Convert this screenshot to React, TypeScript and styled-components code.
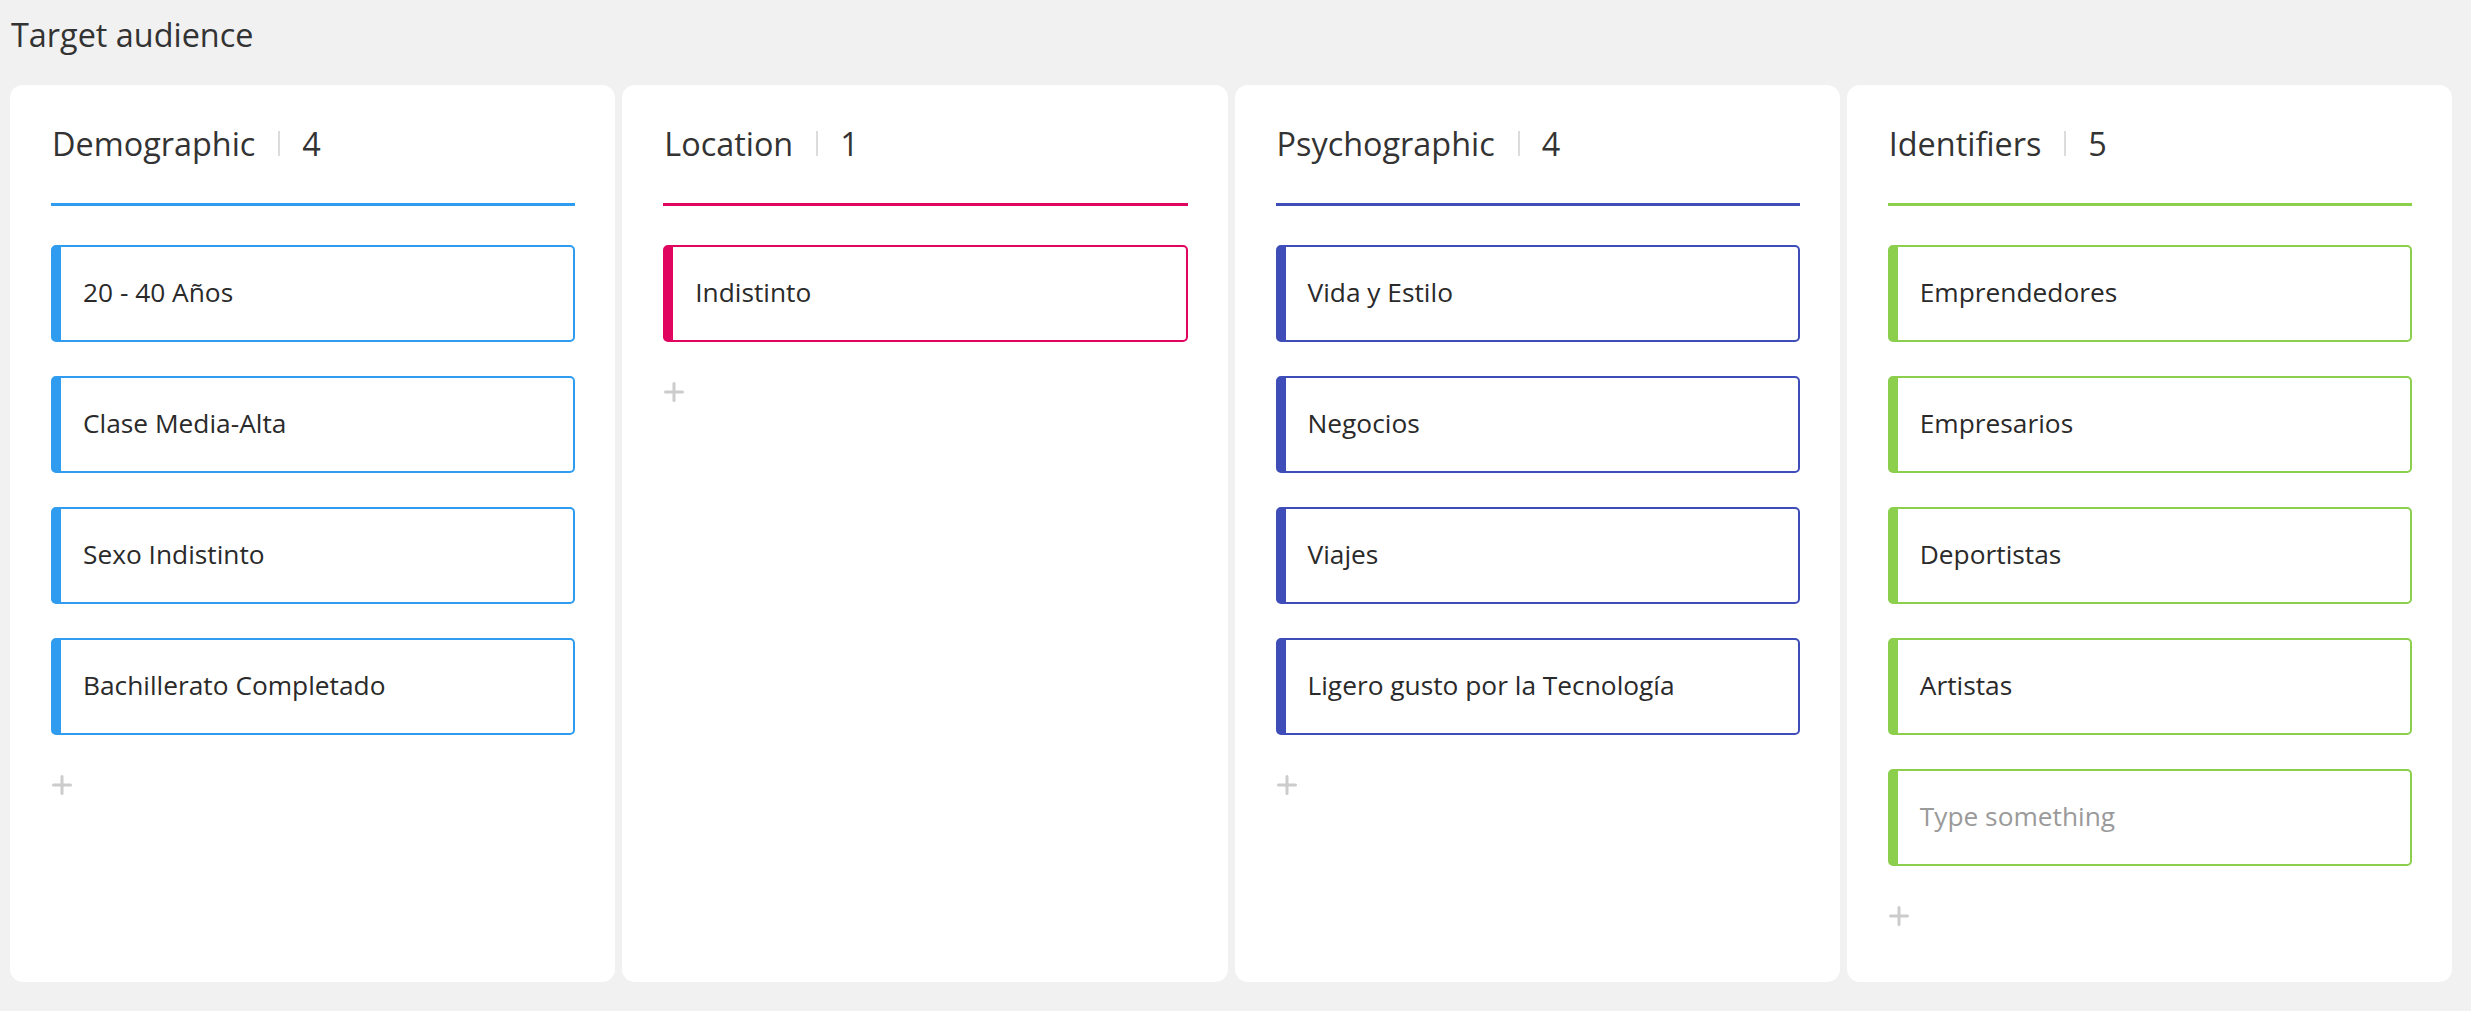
import React from 'react';
import styled, { createGlobalStyle } from 'styled-components';

const GlobalStyle = createGlobalStyle`
  html, body {
    margin: 0;
    padding: 0;
    background: #f1f1f1;
  }
  body {
    font-family: "Open Sans", "Noto Sans", sans-serif;
  }
`;

const Page = styled.div`
  min-height: 1011px;
  box-sizing: border-box;
  padding: 12px 19px 0 10px;
  background: #f1f1f1;
`;

const Title = styled.h1`
  margin: 0 0 29px 1px;
  font-size: 32.4px;
  line-height: 44px;
  font-weight: 400;
  color: #333;
`;

const Board = styled.div`
  display: grid;
  grid-template-columns: repeat(4, 1fr);
  gap: 7px;
`;

const Column = styled.section`
  background: #fff;
  border-radius: 13px;
  height: 897px;
  box-sizing: border-box;
  padding: 36px 40px 0 41px;
`;

const Header = styled.div`
  display: flex;
  align-items: center;
  height: 44px;
  font-size: 32.4px;
  line-height: 44px;
  color: #333;
`;

const HeaderName = styled.span`
  padding-left: 1px;
`;

const Separator = styled.span`
  width: 2px;
  height: 25px;
  background: #dcdcdc;
  margin: 0 22px 0 23px;
`;

const Count = styled.span``;

const Divider = styled.div<{ $color: string }>`
  height: 3px;
  margin-top: 38px;
  background: ${(p) => p.$color};
`;

const List = styled.div`
  display: flex;
  flex-direction: column;
  gap: 34px;
  margin-top: 39px;
`;

const Item = styled.div<{ $color: string; $placeholder?: boolean }>`
  height: 97px;
  box-sizing: border-box;
  display: flex;
  align-items: center;
  border: 2px solid ${(p) => p.$color};
  border-left-width: 10px;
  border-radius: 5px;
  padding: 0 0 3px 22px;
  font-size: 26.3px;
  color: ${(p) => (p.$placeholder ? '#9a9a9a' : '#2a2a2a')};
`;

const AddButton = styled.button`
  display: block;
  margin: 40px 0 0 1px;
  padding: 0;
  border: 0;
  background: none;
  width: 20px;
  height: 20px;
  color: #cccccc;
  cursor: pointer;
  svg {
    display: block;
  }
`;

const PlusIcon = () => (
  <svg width="20" height="20" viewBox="0 0 20 20" fill="none">
    <path d="M10 1.5V18.5M1.5 10H18.5" stroke="currentColor" strokeWidth="3" strokeLinecap="round" />
  </svg>
);

type Col = {
  name: string;
  color: string;
  items: string[];
  placeholder?: string;
};

const columns: Col[] = [
  {
    name: 'Demographic',
    color: '#2f9cf0',
    items: ['20 - 40 Años', 'Clase Media-Alta', 'Sexo Indistinto', 'Bachillerato Completado'],
  },
  {
    name: 'Location',
    color: '#e0055f',
    items: ['Indistinto'],
  },
  {
    name: 'Psychographic',
    color: '#3f4db8',
    items: ['Vida y Estilo', 'Negocios', 'Viajes', 'Ligero gusto por la Tecnología'],
  },
  {
    name: 'Identifiers',
    color: '#8ccf4d',
    items: ['Emprendedores', 'Empresarios', 'Deportistas', 'Artistas'],
    placeholder: 'Type something',
  },
];

export default function App() {
  return (
    <>
      <GlobalStyle />
      <Page>
        <Title>Target audience</Title>
        <Board>
          {columns.map((col) => {
            const count = col.items.length + (col.placeholder ? 1 : 0);
            return (
              <Column key={col.name}>
                <Header>
                  <HeaderName>{col.name}</HeaderName>
                  <Separator />
                  <Count>{count}</Count>
                </Header>
                <Divider $color={col.color} />
                <List>
                  {col.items.map((it) => (
                    <Item key={it} $color={col.color}>
                      {it}
                    </Item>
                  ))}
                  {col.placeholder && (
                    <Item $color={col.color} $placeholder>
                      {col.placeholder}
                    </Item>
                  )}
                </List>
                <AddButton aria-label="Add">
                  <PlusIcon />
                </AddButton>
              </Column>
            );
          })}
        </Board>
      </Page>
    </>
  );
}
